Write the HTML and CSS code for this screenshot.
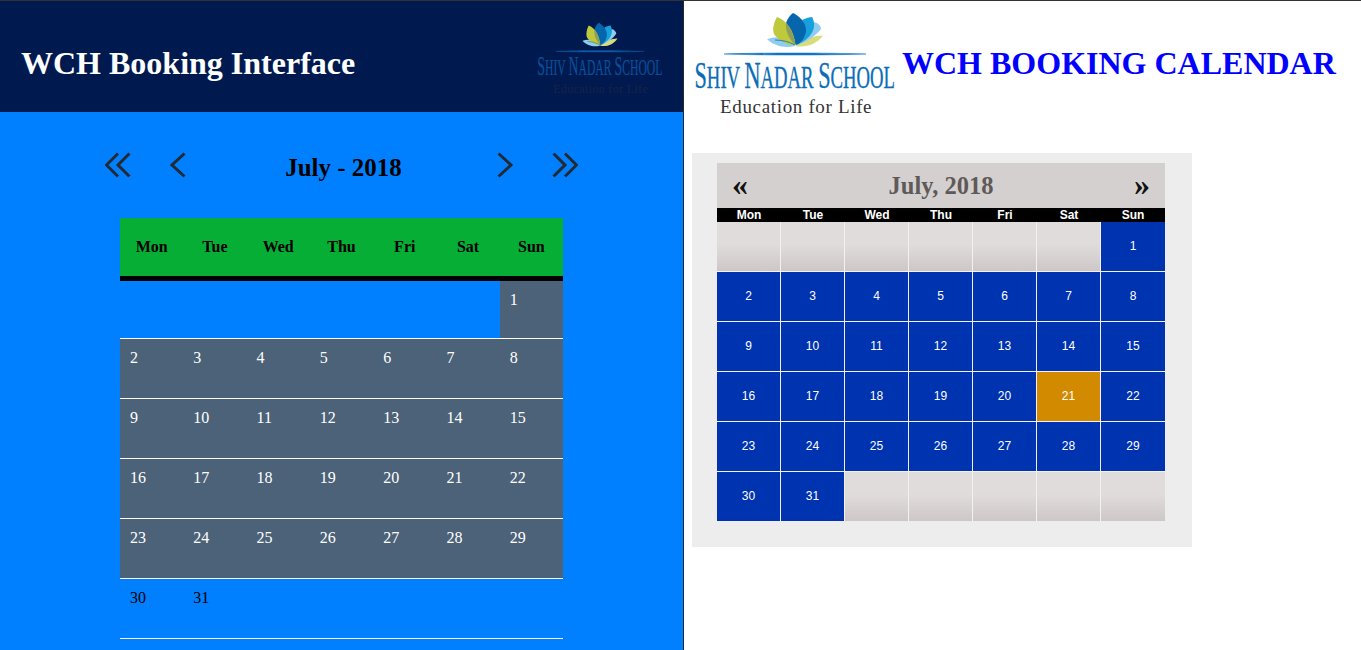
FILE: index.html
```html
<!DOCTYPE html>
<html lang="en">
<head>
<meta charset="utf-8">
<title>WCH Booking</title>
<link rel="stylesheet" href="styles.css">
</head>
<body>
<div class="page">
  <section class="left">
    <header class="left-head">
      <h1 class="left-title">WCH Booking Interface</h1>
      <svg class="logo logo-small" viewBox="0 0 202 106" preserveAspectRatio="none">
        <g class="lotus">
          <path class="p-sky" d="M73 27C84 23 98 27 101 34C92 36 81 35 73 27Z"/>
          <path class="p-pale" d="M129 23.500C120 24 106 27 101 34C112 36 123 32 129 23.500Z"/>
          <path class="p-sky" d="M120 10C124 11 127 14 127 17C122 24 112 30 103 33Z"/>
          <path class="p-light" d="M108 8C112 6 116 5 118 5C122 12 122 24 103 33C108 24 112 17 108 8Z"/>
          <path class="p-dark" d="M99 1C104 3 112 10 112 18C112 25 107 31 102 33C96 27 91 20 92 11C94 6 96 3 99 1Z"/>
          <path class="p-olive" d="M83 5C92 8 100 18 101.500 33C92 33 84 28 80 22C78 17 80 10 83 5Z"/>
          <path class="p-over" d="M92 11C97 16 100 24 101.500 33C96 28 91 20 92 11Z"/>
          <path class="p-accent" d="M81 28C88 28 96 30 101 33"/>
        </g>
        <path class="rule" d="M30 42C70 40.6 130 40.6 172 42C130 43.4 70 43.4 30 42Z"/>
        <text class="school" transform="translate(.5 76) scale(.585 1)"><tspan class="cap">S</tspan>HIV <tspan class="cap">N</tspan>ADAR <tspan class="cap">S</tspan>CHOOL</text>
        <text class="motto" x="26" y="101">Education for Life</text>
      </svg>
    </header>
    <div class="month-nav">
      <svg class="chev chev-double" viewBox="0 0 27 26"><path d="M13 1.500L1.500 13L13 24.500M24.500 1.500L13 13L24.500 24.500"/></svg>
      <svg class="chev chev-single" viewBox="0 0 16 26"><path d="M14.500 1.500L2 13L14.500 24.500"/></svg>
      <h2 class="month-title">July - 2018</h2>
      <svg class="chev chev-single" viewBox="0 0 16 26"><path d="M1.500 1.500L14 13L1.500 24.500"/></svg>
      <svg class="chev chev-double" viewBox="0 0 27 26"><path d="M2.500 1.500L14 13L2.500 24.500M14 1.500L25.500 13L14 24.500"/></svg>
    </div>
    <div class="book">
      <div class="book-head"><span>Mon</span><span>Tue</span><span>Wed</span><span>Thu</span><span>Fri</span><span>Sat</span><span>Sun</span></div>
      <div class="book-row book-first"><span class="empty"></span><span class="empty"></span><span class="empty"></span><span class="empty"></span><span class="empty"></span><span class="empty"></span><span>1</span></div>
      <div class="book-row"><span>2</span><span>3</span><span>4</span><span>5</span><span>6</span><span>7</span><span>8</span></div>
      <div class="book-row"><span>9</span><span>10</span><span>11</span><span>12</span><span>13</span><span>14</span><span>15</span></div>
      <div class="book-row"><span>16</span><span>17</span><span>18</span><span>19</span><span>20</span><span>21</span><span>22</span></div>
      <div class="book-row"><span>23</span><span>24</span><span>25</span><span>26</span><span>27</span><span>28</span><span>29</span></div>
      <div class="book-row book-last"><span>30</span><span>31</span></div>
    </div>
  </section>
  <section class="right">
    <header class="right-head">
      <svg class="logo logo-big" viewBox="0 0 202 106" preserveAspectRatio="none">
        <g class="lotus">
          <path class="p-sky" d="M73 27C84 23 98 27 101 34C92 36 81 35 73 27Z"/>
          <path class="p-pale" d="M129 23.500C120 24 106 27 101 34C112 36 123 32 129 23.500Z"/>
          <path class="p-sky" d="M120 10C124 11 127 14 127 17C122 24 112 30 103 33Z"/>
          <path class="p-light" d="M108 8C112 6 116 5 118 5C122 12 122 24 103 33C108 24 112 17 108 8Z"/>
          <path class="p-dark" d="M99 1C104 3 112 10 112 18C112 25 107 31 102 33C96 27 91 20 92 11C94 6 96 3 99 1Z"/>
          <path class="p-olive" d="M83 5C92 8 100 18 101.500 33C92 33 84 28 80 22C78 17 80 10 83 5Z"/>
          <path class="p-over" d="M92 11C97 16 100 24 101.500 33C96 28 91 20 92 11Z"/>
          <path class="p-accent" d="M81 28C88 28 96 30 101 33"/>
        </g>
        <path class="rule" d="M30 42C70 40.6 130 40.6 172 42C130 43.4 70 43.4 30 42Z"/>
        <text class="school" transform="translate(.5 76) scale(.585 1)"><tspan class="cap">S</tspan>HIV <tspan class="cap">N</tspan>ADAR <tspan class="cap">S</tspan>CHOOL</text>
        <text class="motto" x="26" y="101">Education for Life</text>
      </svg>
      <h1 class="right-title">WCH BOOKING CALENDAR</h1>
    </header>
    <div class="cal-wrap">
      <div class="cal">
        <div class="cal-title"><span class="cal-arrow">«</span><span class="cal-month">July, 2018</span><span class="cal-arrow">»</span></div>
        <div class="cal-days"><span>Mon</span><span>Tue</span><span>Wed</span><span>Thu</span><span>Fri</span><span>Sat</span><span>Sun</span></div>
        <div class="cal-grid">
          <span class="off"></span><span class="off"></span><span class="off"></span><span class="off"></span><span class="off"></span><span class="off"></span><span>1</span>
          <span>2</span><span>3</span><span>4</span><span>5</span><span>6</span><span>7</span><span>8</span>
          <span>9</span><span>10</span><span>11</span><span>12</span><span>13</span><span>14</span><span>15</span>
          <span>16</span><span>17</span><span>18</span><span>19</span><span>20</span><span class="today">21</span><span>22</span>
          <span>23</span><span>24</span><span>25</span><span>26</span><span>27</span><span>28</span><span>29</span>
          <span class="end">30</span><span class="end">31</span><span class="off end"></span><span class="off end"></span><span class="off end"></span><span class="off end"></span><span class="off end"></span>
        </div>
      </div>
    </div>
  </section>
</div>
</body>
</html>
```
FILE: styles.css
```css
* { box-sizing: border-box; }
html, body { margin: 0; padding: 0; height: 100%; overflow: hidden; background: #fff; }
body { font-family: "Liberation Serif", serif; }
h1, h2 { margin: 0; }

.page { display: flex; height: 650px; border-top: 1px solid #333; }

/* Left pane */
.left { width: 684px; flex: none; background: #0080ff; border-right: 1px solid #2a2a2a; }
.left-head { height: 111px; background: #001a50; display: flex; align-items: flex-start; justify-content: space-between; padding: 21px 20px 0 21px; }
.left-title { margin-top: 21px; color: #fff; font-size: 32px; line-height: 40px; font-weight: bold; }

.logo { display: block; flex: none; }
.logo-small { width: 126px; height: 74px; }
.logo-big { width: 202px; height: 106px; margin-top: 11px; }

.school { font-family: "Liberation Serif", serif; font-size: 32px; fill: #0b6db7; stroke: #0b6db7; stroke-width: 0.35; }
.cap { font-size: 38px; }
.motto { font-family: "Liberation Serif", serif; font-size: 19px; letter-spacing: 0.66px; fill: #333; }
.rule { fill: #1374bb; stroke: #1374bb; stroke-width: 0.5; }
.p-sky { fill: #8fcdf0; }
.p-pale { fill: #d9dc7a; }
.p-light { fill: #18a0dc; }
.p-dark { fill: #0565ad; }
.p-olive { fill: #bfc93c; }
.p-over { fill: #8f9e58; }
.p-accent { fill: none; stroke: #2a7fc8; stroke-width: 1; }

.logo-small .school { fill: #0a4f97; stroke: #0a4f97; }
.logo-small .motto { fill: #182347; }
.logo-small .rule { fill: #0c5ca6; stroke: #0c5ca6; }

.month-nav { display: flex; align-items: center; height: 40px; margin-top: 33px; padding-left: 105px; }
.chev { display: block; flex: none; height: 26px; }
.chev path { fill: none; stroke: #222a36; stroke-width: 3; }
.chev-double { width: 27px; }
.chev-single { width: 16px; }
.chev-double + .chev-single { margin-left: 38px; }
.chev-single + .chev-double { margin-left: 38px; }
.month-title { width: 311px; padding: 6px 0 0 4px; text-align: center; font-size: 25px; line-height: 40px; font-weight: bold; color: #000; }

.book { width: 443px; margin: 33px 0 0 120px; }
.book-head { display: grid; grid-template-columns: repeat(7, 1fr); height: 63px; background: #07ae35; border-bottom: 5px solid #000; }
.book-head span { text-align: center; font-size: 16px; font-weight: bold; line-height: 58px; color: #000; }
.book-row { display: grid; grid-template-columns: repeat(7, 1fr); height: 60px; border-bottom: 1px solid #fff; }
.book-row.book-first { height: 58px; }
.book-row span { background: #4c6278; color: #fff; font-size: 16px; line-height: 18px; padding: 10px 0 0 10px; }
.book-row span.empty { background: none; }
.book-last span { background: none; color: #000; }

/* Right pane */
.right { flex: 1; min-width: 0; background: #fff; }
.right-head { display: flex; align-items: flex-start; padding-left: 10px; height: 152px; }
.right-title { margin-left: 6px; margin-top: 42px; color: #00f; font-size: 32px; line-height: 40px; font-weight: bold; white-space: nowrap; }

.cal-wrap { width: 500px; height: 394px; margin-left: 8px; background: #ededed; padding: 10px 27px 0 25px; }
.cal { width: 448px; }
.cal-title { display: flex; align-items: flex-start; justify-content: space-between; height: 45px; background: #d4d0cf; padding: 0 15px; }
.cal-month { font-size: 24.5px; line-height: 45px; font-weight: bold; color: #5f5a58; }
.cal-arrow { font-family: "Liberation Serif", serif; font-size: 32px; line-height: 42px; font-weight: bold; color: #111; }
.cal-days { display: grid; grid-template-columns: repeat(7, 64px); height: 14px; background: #000; }
.cal-days span { font-family: "Liberation Sans", sans-serif; font-size: 12px; line-height: 14px; font-weight: bold; text-align: center; color: #fff; }
.cal-grid { display: grid; grid-template-columns: repeat(7, 64px); grid-auto-rows: 50px; }
.cal-grid span { display: flex; align-items: center; justify-content: center; padding-bottom: 1px; background: #0033b0; border-right: 1px solid #f2f2f2; border-bottom: 1px solid #f2f2f2; color: #fff; font-family: "Liberation Sans", sans-serif; font-size: 12px; }
.cal-grid span:nth-child(7n) { border-right: 0; }
.cal-grid span.end { height: 49px; border-bottom: 0; }
.cal-grid span.off { background: linear-gradient(#e0dcdb 0%, #e0dcdb 45%, #cdc8c7 100%); }
.cal-grid span.today { background: #d28a00; }
```
